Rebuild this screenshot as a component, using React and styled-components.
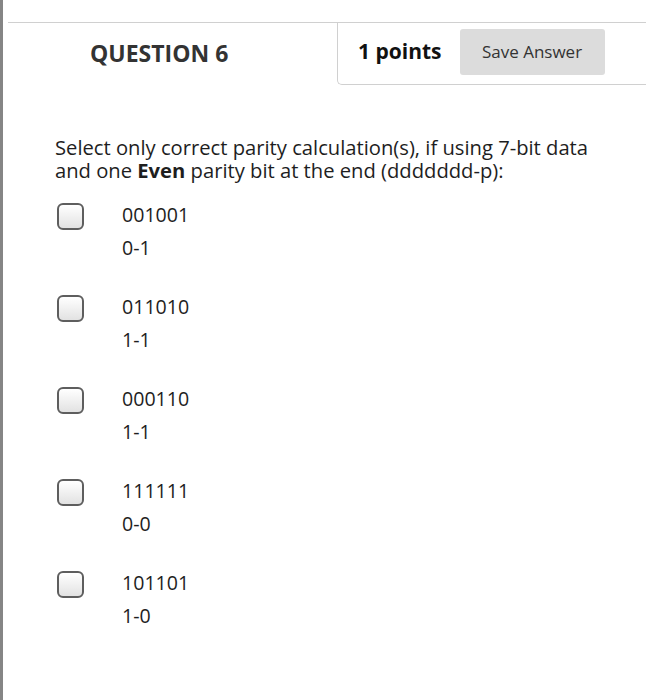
import React from "react";
import styled, { createGlobalStyle } from "styled-components";

const Global = createGlobalStyle`
  html, body { margin: 0; padding: 0; background: #fff; }
  body { font-family: "Open Sans", "Liberation Sans", sans-serif; }
`;

const Page = styled.div`
  min-height: 700px;
  box-sizing: border-box;
  border-left: 3px solid #858585;
  padding-top: 22px;
`;

const Header = styled.div`
  margin-left: 5px;
  border-top: 1px solid #d0d0d0;
  display: flex;
  height: 62px;
`;

const TitleCell = styled.div`
  width: 329px;
  box-sizing: border-box;
  padding-left: 82px;
  padding-top: 15px;
  font-size: 23px;
  font-weight: 700;
  color: #333;
  line-height: 30px;
`;

const PointsCell = styled.div`
  flex: 1;
  display: flex;
  align-items: center;
  gap: 18px;
  padding-left: 20px;
  border-left: 1px solid #d0d0d0;
  border-bottom: 1px solid #d0d0d0;
  border-bottom-left-radius: 5px;
`;

const Points = styled.span`
  font-size: 21px;
  font-weight: 700;
  color: #111;
  margin-top: -5px;
`;

const SaveButton = styled.button`
  width: 145px;
  height: 46px;
  margin-top: -4px;
  border: none;
  border-radius: 3px;
  background: #dcdcdc;
  color: #333;
  font-family: "Open Sans", "Liberation Sans", sans-serif;
  font-size: 17px;
  padding: 0;
`;

const Body = styled.div`
  padding-left: 52px;
  padding-top: 51px;
`;

const Prompt = styled.p`
  margin: 0;
  font-size: 20.2px;
  line-height: 22.5px;
  color: #1e1e1e;
`;

const Options = styled.div`
  margin-top: 22px;
  display: flex;
  flex-direction: column;
  gap: 35px;
`;

const Option = styled.label`
  display: flex;
  align-items: flex-start;
`;

const Box = styled.span`
  width: 27px;
  height: 27px;
  margin-left: 2px;
  box-sizing: border-box;
  border: 2px solid #5e5e5e;
  border-radius: 6px;
  background: linear-gradient(#ffffff, #e2e2e2);
  flex-shrink: 0;
`;

const Texts = styled.div`
  margin-left: 38px;
  display: flex;
  flex-direction: column;
  gap: 9px;
  color: #1e1e1e;
  font-size: 19.6px;
  line-height: 24px;
`;

const options = [
  ["001001", "0-1"],
  ["011010", "1-1"],
  ["000110", "1-1"],
  ["111111", "0-0"],
  ["101101", "1-0"],
];

export default function App() {
  return (
    <>
      <Global />
      <Page>
        <Header>
          <TitleCell>QUESTION 6</TitleCell>
          <PointsCell>
            <Points>1 points</Points>
            <SaveButton>Save Answer</SaveButton>
          </PointsCell>
        </Header>
        <Body>
          <Prompt>
            Select only correct parity calculation(s), if using 7-bit data
            <br />
            and one <b>Even</b> parity bit at the end (ddddddd-p):
          </Prompt>
          <Options>
            {options.map(([a, b]) => (
              <Option key={a}>
                <Box />
                <Texts>
                  <span>{a}</span>
                  <span>{b}</span>
                </Texts>
              </Option>
            ))}
          </Options>
        </Body>
      </Page>
    </>
  );
}
